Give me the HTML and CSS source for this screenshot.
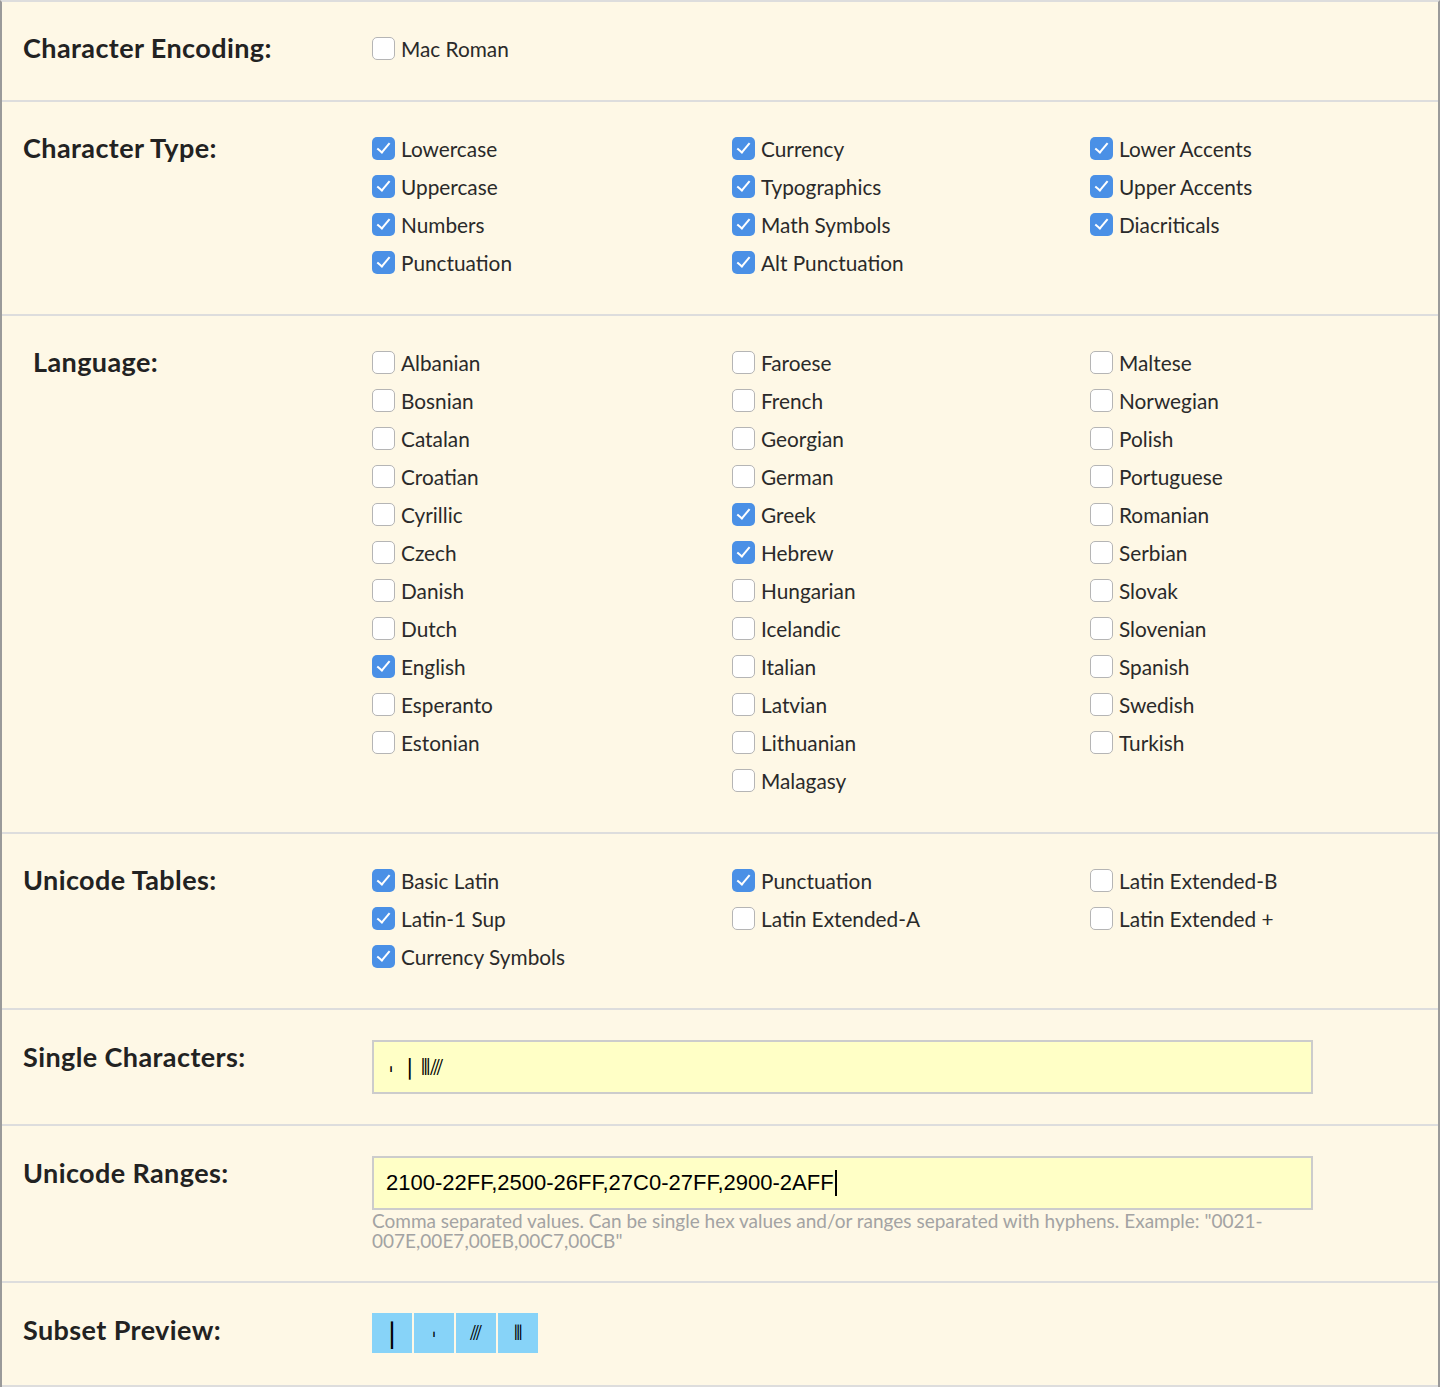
FILE: index.html
```html
<!DOCTYPE html>
<html>
<head>
<meta charset="utf-8">
<link rel="stylesheet" href="styles.css">
</head>
<body>
<div class="panel">

  <section class="row">
    <div class="label">Character Encoding:</div>
    <div class="opts">
      <div class="col">
        <label class="opt"><span class="cb"></span>Mac Roman</label>
      </div>
    </div>
  </section>

  <section class="row">
    <div class="label">Character Type:</div>
    <div class="opts">
      <div class="col">
        <label class="opt"><span class="cb on"></span>Lowercase</label>
        <label class="opt"><span class="cb on"></span>Uppercase</label>
        <label class="opt"><span class="cb on"></span>Numbers</label>
        <label class="opt"><span class="cb on"></span>Punctuation</label>
      </div>
      <div class="col">
        <label class="opt"><span class="cb on"></span>Currency</label>
        <label class="opt"><span class="cb on"></span>Typographics</label>
        <label class="opt"><span class="cb on"></span>Math Symbols</label>
        <label class="opt"><span class="cb on"></span>Alt Punctuation</label>
      </div>
      <div class="col">
        <label class="opt"><span class="cb on"></span>Lower Accents</label>
        <label class="opt"><span class="cb on"></span>Upper Accents</label>
        <label class="opt"><span class="cb on"></span>Diacriticals</label>
      </div>
    </div>
  </section>

  <section class="row">
    <div class="label indent">Language:</div>
    <div class="opts">
      <div class="col">
        <label class="opt"><span class="cb"></span>Albanian</label>
        <label class="opt"><span class="cb"></span>Bosnian</label>
        <label class="opt"><span class="cb"></span>Catalan</label>
        <label class="opt"><span class="cb"></span>Croatian</label>
        <label class="opt"><span class="cb"></span>Cyrillic</label>
        <label class="opt"><span class="cb"></span>Czech</label>
        <label class="opt"><span class="cb"></span>Danish</label>
        <label class="opt"><span class="cb"></span>Dutch</label>
        <label class="opt"><span class="cb on"></span>English</label>
        <label class="opt"><span class="cb"></span>Esperanto</label>
        <label class="opt"><span class="cb"></span>Estonian</label>
      </div>
      <div class="col">
        <label class="opt"><span class="cb"></span>Faroese</label>
        <label class="opt"><span class="cb"></span>French</label>
        <label class="opt"><span class="cb"></span>Georgian</label>
        <label class="opt"><span class="cb"></span>German</label>
        <label class="opt"><span class="cb on"></span>Greek</label>
        <label class="opt"><span class="cb on"></span>Hebrew</label>
        <label class="opt"><span class="cb"></span>Hungarian</label>
        <label class="opt"><span class="cb"></span>Icelandic</label>
        <label class="opt"><span class="cb"></span>Italian</label>
        <label class="opt"><span class="cb"></span>Latvian</label>
        <label class="opt"><span class="cb"></span>Lithuanian</label>
        <label class="opt"><span class="cb"></span>Malagasy</label>
      </div>
      <div class="col">
        <label class="opt"><span class="cb"></span>Maltese</label>
        <label class="opt"><span class="cb"></span>Norwegian</label>
        <label class="opt"><span class="cb"></span>Polish</label>
        <label class="opt"><span class="cb"></span>Portuguese</label>
        <label class="opt"><span class="cb"></span>Romanian</label>
        <label class="opt"><span class="cb"></span>Serbian</label>
        <label class="opt"><span class="cb"></span>Slovak</label>
        <label class="opt"><span class="cb"></span>Slovenian</label>
        <label class="opt"><span class="cb"></span>Spanish</label>
        <label class="opt"><span class="cb"></span>Swedish</label>
        <label class="opt"><span class="cb"></span>Turkish</label>
      </div>
    </div>
  </section>

  <section class="row">
    <div class="label">Unicode Tables:</div>
    <div class="opts">
      <div class="col">
        <label class="opt"><span class="cb on"></span>Basic Latin</label>
        <label class="opt"><span class="cb on"></span>Latin-1 Sup</label>
        <label class="opt"><span class="cb on"></span>Currency Symbols</label>
      </div>
      <div class="col">
        <label class="opt"><span class="cb on"></span>Punctuation</label>
        <label class="opt"><span class="cb"></span>Latin Extended-A</label>
      </div>
      <div class="col">
        <label class="opt"><span class="cb"></span>Latin Extended-B</label>
        <label class="opt"><span class="cb"></span>Latin Extended +</label>
      </div>
    </div>
  </section>

  <section class="row field-row">
    <div class="label short">Single Characters:</div>
    <div class="fieldwrap">
      <div class="field chars"><span class="g-tick">ˈ</span><span class="g-bar">∣</span><span class="g-tri">⫴</span><span class="g-sl">⫻</span></div>
    </div>
  </section>

  <section class="row field-row">
    <div class="label short">Unicode Ranges:</div>
    <div class="fieldwrap">
      <div class="field">2100-22FF,2500-26FF,27C0-27FF,2900-2AFF<span class="caret"></span></div>
      <p class="help">Comma separated values. Can be single hex values and/or ranges separated with hyphens. Example: "0021-007E,00E7,00EB,00C7,00CB"</p>
    </div>
  </section>

  <section class="row field-row preview-row">
    <div class="label short">Subset Preview:</div>
    <div class="preview">
      <span class="glyph big">∣</span>
      <span class="glyph"><span class="g-tick">ˈ</span></span>
      <span class="glyph">⫻</span>
      <span class="glyph">⫴</span>
    </div>
  </section>

</div>
</body>
</html>
```

FILE: styles.css
```css
html, body {
  margin: 0;
  padding: 0;
  background: #ffffff;
}

body {
  font-family: Lato, "Noto Sans", sans-serif;
  color: #222;
}

.panel {
  width: 1436px;
  background: #fef8e6;
  border-left: 2px solid #9a9a9a;
  border-right: 2px solid #9a9a9a;
  border-top: 2px solid #dddddd;
}

.row {
  display: flex;
  border-bottom: 2px solid #dddddd;
  padding: 27px 0 33px 21px;
}

.label {
  width: 349px;
  flex: none;
  font-weight: 700;
  font-size: 27px;
  letter-spacing: 0.4px;
  line-height: 38px;
  color: #222;
}

.label.indent {
  padding-left: 10px;
  width: 339px;
}

.opts {
  display: flex;
}

.col {
  width: 360px;
  display: flex;
  flex-direction: column;
}

.col:nth-child(2) {
  width: 358px;
}

.col:last-child {
  width: auto;
}

.opt {
  display: flex;
  align-items: center;
  height: 38px;
  font-size: 20.8px;
  color: #2a2a2a;
  gap: 6px;
}

.cb {
  width: 23px;
  height: 23px;
  box-sizing: border-box;
  border: 1px solid #b5b5b5;
  border-radius: 5px;
  background: #ffffff;
  flex: none;
  position: relative;
}

.cb.on {
  border: none;
  background: #4a90e6;
}

.cb.on::after {
  content: "";
  position: absolute;
  left: 8px;
  top: 3px;
  width: 5px;
  height: 11px;
  border-right: 2.5px solid #ffffff;
  border-bottom: 2.5px solid #ffffff;
  transform: rotate(40deg);
}

.field-row {
  padding: 30px 0 30px 21px;
}

.label.short {
  line-height: 34px;
}

.fieldwrap {
  width: 941px;
}

.field {
  box-sizing: border-box;
  width: 941px;
  height: 54px;
  border: 2px solid #cccccc;
  background: #ffffc6;
  padding: 0 12px;
  display: flex;
  align-items: center;
  font-family: "Liberation Sans", Arial, sans-serif;
  font-size: 22px;
  color: #000;
}

.field.chars {
  font-family: "DejaVu Sans", sans-serif;
  font-size: 22px;
  padding-left: 14px;
}

.g-tick {
  display: inline-block;
  transform: translateY(7px);
  font-family: "DejaVu Sans", sans-serif;
}

.field .g-tick {
  margin-right: 10px;
}

.g-bar {
  margin-right: 6px;
}

.caret {
  display: inline-block;
  width: 2px;
  height: 26px;
  background: #000;
  margin-left: 1px;
}

.help {
  margin: 1px 0 0 0;
  font-size: 19px;
  line-height: 20px;
  color: #a3a3a3;
}

.preview-row {
  padding-bottom: 32px;
}

.preview {
  display: flex;
  gap: 2px;
}

.glyph {
  width: 40px;
  height: 40px;
  background: #87d3f8;
  display: flex;
  align-items: center;
  justify-content: center;
  font-family: "DejaVu Sans", sans-serif;
  font-size: 20px;
  color: #000;
}

.glyph.big {
  font-size: 28px;
}
```
